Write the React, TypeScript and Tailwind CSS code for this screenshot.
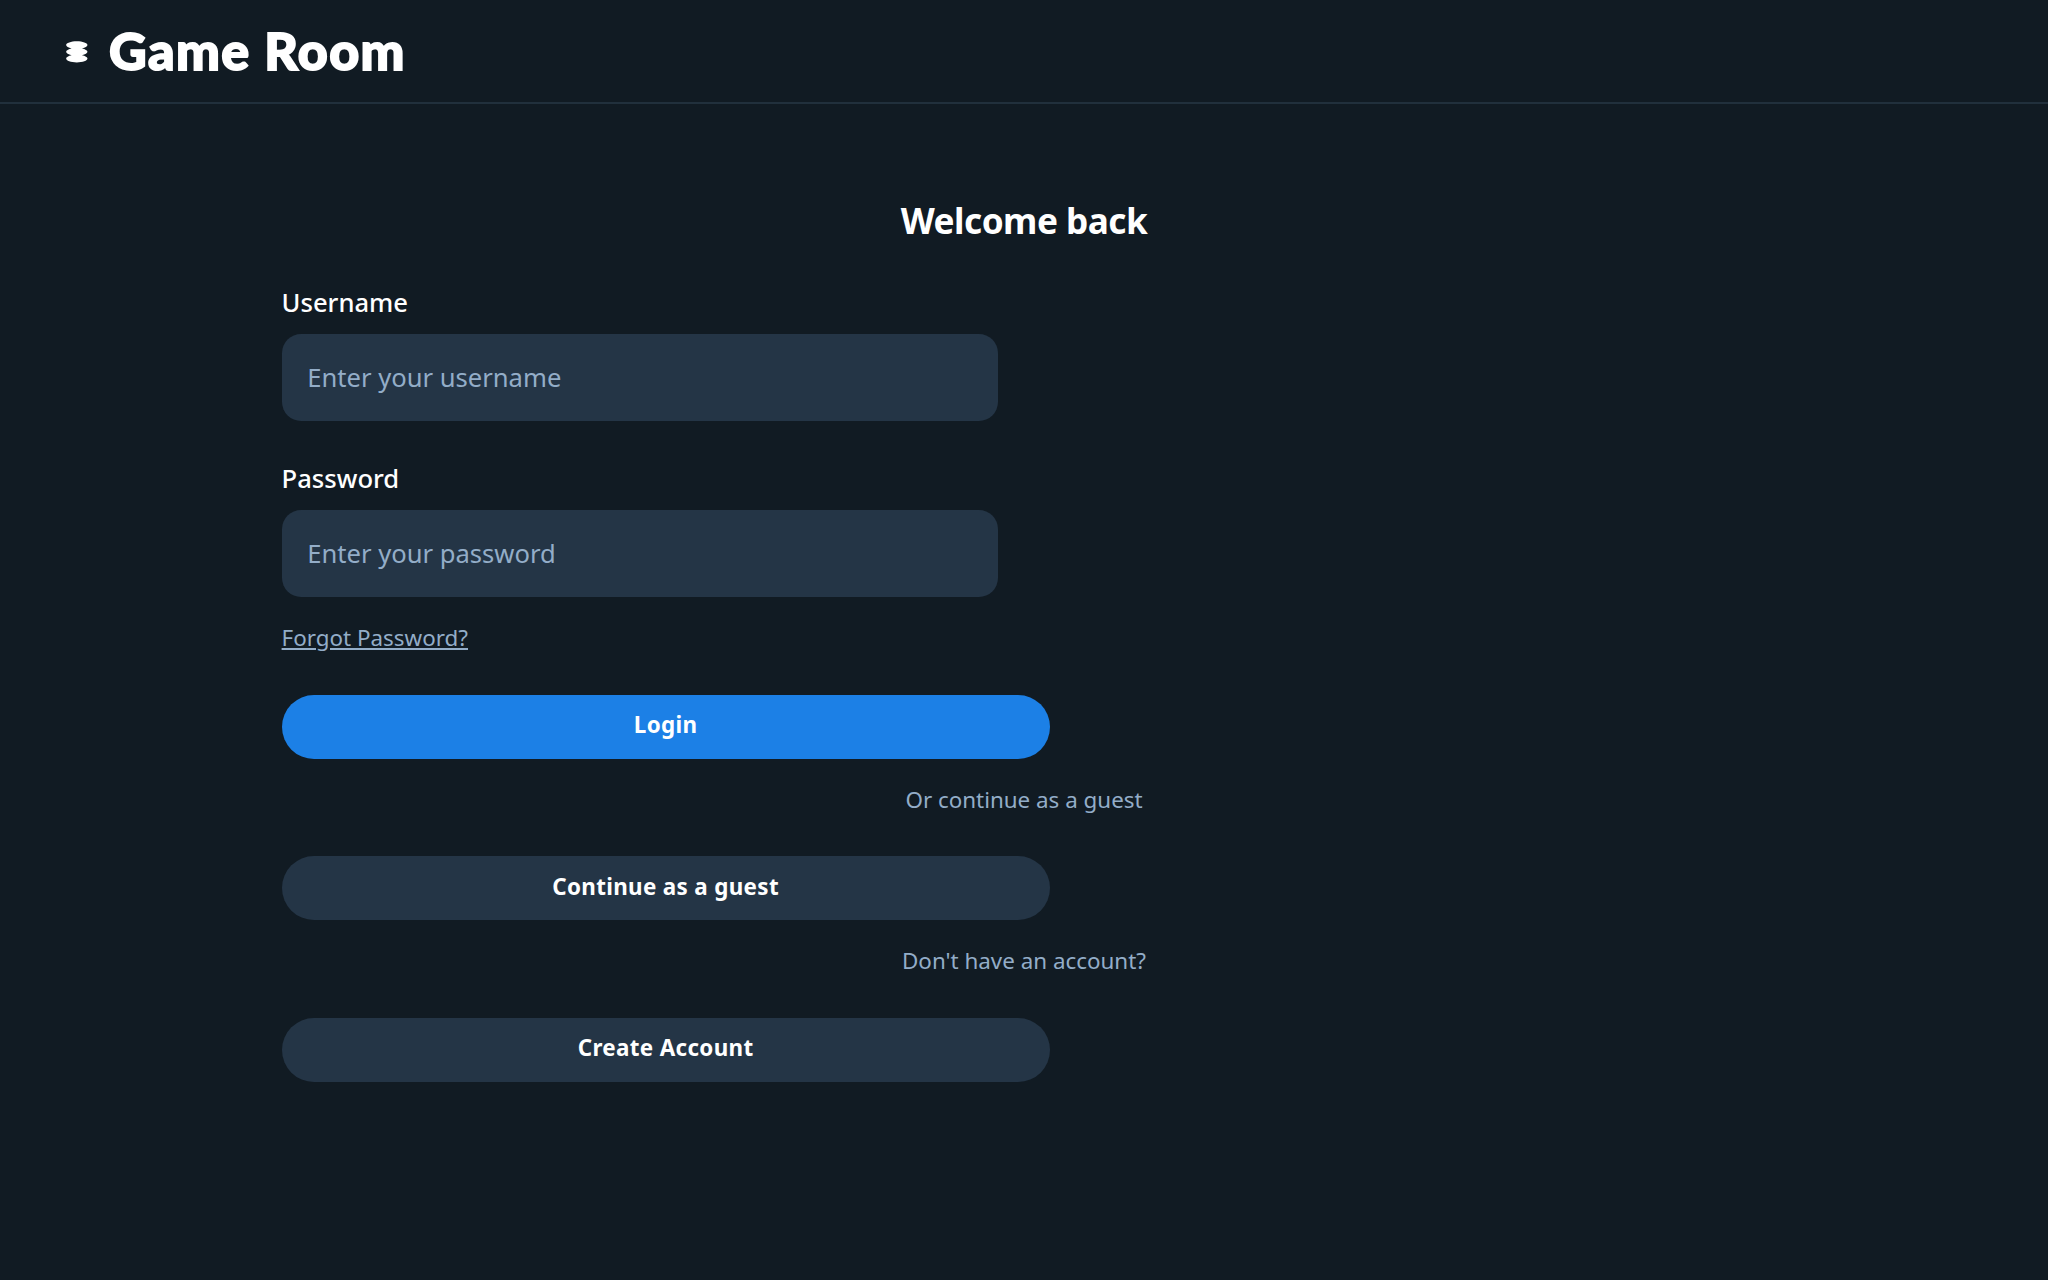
import type { ReactNode } from "react";

function Field({ label, type, placeholder }: { label: string; type: string; placeholder: string }) {
  return (
    <label className="flex w-[716.8px] flex-col py-[19.2px]">
      <span className="pt-px pb-[11.8px] text-[25.6px] leading-[38.4px] font-medium text-white">{label}</span>
      <input
        type={type}
        placeholder={placeholder}
        className="h-[86.4px] w-full rounded-[19.2px] bg-[#243546] px-[25.6px] text-[25.6px] leading-normal text-white placeholder:text-[#93adc8] placeholder:opacity-100 focus:outline-none"
      />
    </label>
  );
}

function Action({ children, primary = false }: { children: ReactNode; primary?: boolean }) {
  return (
    <div className="flex py-[19.2px]">
      <button
        className={
          "flex h-16 w-[768px] items-center justify-center rounded-full pb-[3.5px] text-[22.4px] leading-[33.6px] font-bold tracking-[0.015em] text-white " +
          (primary ? "bg-[#1c80e6]" : "bg-[#243546]")
        }
      >
        {children}
      </button>
    </div>
  );
}

function Note({ children }: { children: ReactNode }) {
  return (
    <p className="pt-[5.2px] pb-[20.4px] text-center text-[22.4px] leading-[33.6px] text-[#93adc8]">{children}</p>
  );
}

export default function App() {
  return (
    <div className="flex min-h-screen flex-col bg-[#111b23] font-['Noto_Sans',sans-serif]">
      <header className="flex h-[104px] items-center gap-[19.4px] border-b-2 border-[#21303c] px-16 text-white">
        <svg className="mt-px size-[25.6px] shrink-0" viewBox="0 0 48 48" fill="currentColor">
          <path d="M44 11.2727C44 14.0109 39.8386 16.3957 33.69 17.6364C39.8386 18.877 44 21.2618 44 24C44 26.7382 39.8386 29.123 33.69 30.3636C39.8386 31.6043 44 33.9891 44 36.7273C44 40.7439 35.0457 44 24 44C12.9543 44 4 40.7439 4 36.7273C4 33.9891 8.16144 31.6043 14.31 30.3636C8.16144 29.123 4 26.7382 4 24C4 21.2618 8.16144 18.877 14.31 17.6364C8.16144 16.3957 4 14.0109 4 11.2727C4 7.25611 12.9543 4 24 4C35.0457 4 44 7.25611 44 11.2727Z" />
        </svg>
        <h1 className="pb-[2px] font-[Lato] text-[52px] leading-none font-black tracking-[1.4px] [-webkit-text-stroke:1.8px_white]">
          Game Room
        </h1>
      </header>
      <main className="mx-auto w-[1536px] px-[25.6px] pt-[64.8px]">
        <h2 className="pt-[29px] pb-[22.2px] text-center text-[35.2px] leading-[44px] font-bold tracking-[-0.015em] text-white">
          Welcome back
        </h2>
        <Field label="Username" type="text" placeholder="Enter your username" />
        <Field label="Password" type="password" placeholder="Enter your password" />
        <p className="pt-[5px] pb-[20.8px] text-[22.4px] leading-[33.6px] text-[#93adc8] underline">Forgot Password?</p>
        <Action primary>Login</Action>
        <Note>Or continue as a guest</Note>
        <Action>Continue as a guest</Action>
        <Note>Don't have an account?</Note>
        <Action>Create Account</Action>
      </main>
    </div>
  );
}
